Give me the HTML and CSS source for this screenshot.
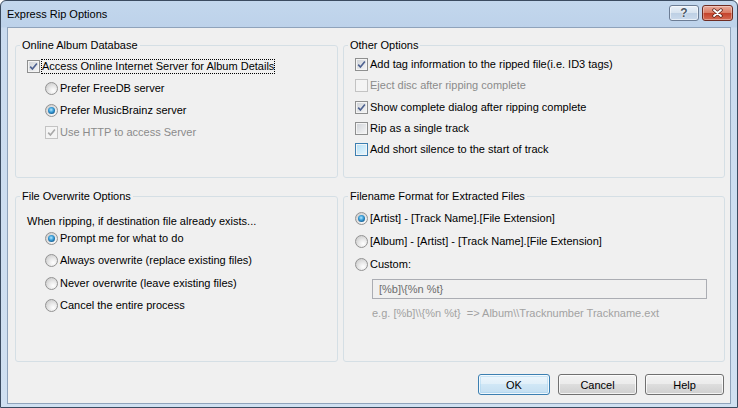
FILE: index.html
```html
<!DOCTYPE html>
<html>
<head>
<meta charset="utf-8">
<title>Express Rip Options</title>
<link rel="stylesheet" href="styles.css">
</head>
<body>
<div class="window">
  <div class="titlebar">
    <span class="title">Express Rip Options</span>
    <div class="caption-btns">
      <span class="cap-btn help">?</span>
      <span class="cap-btn close">
        <svg width="13" height="10" viewBox="0 0 13 10">
          <path d="M3 2 L10 8 M10 2 L3 8" stroke="#5b2218" stroke-width="3.4" stroke-linecap="round"/>
          <path d="M3 2 L10 8 M10 2 L3 8" stroke="#ffffff" stroke-width="1.9" stroke-linecap="round"/>
        </svg>
      </span>
    </div>
  </div>
  <div class="client">
    <div class="groups">
      <fieldset class="group g1">
        <legend>Online Album Database</legend>
        <div class="inner">
          <div class="row"><span class="cb"><svg viewBox="0 0 11 11"><path class="tick" d="M2.2 5.6 L4.4 8 L8.9 2.4"/></svg></span><span class="lbl focus">Access Online Internet Server for Album Details</span></div>
          <div class="sub">
            <div class="row"><span class="rb"></span><span class="lbl">Prefer FreeDB server</span></div>
            <div class="row"><span class="rb on"></span><span class="lbl">Prefer MusicBrainz server</span></div>
            <div class="row"><span class="cb dis"><svg viewBox="0 0 11 11"><path class="tick" d="M2.2 5.6 L4.4 8 L8.9 2.4"/></svg></span><span class="lbl dis">Use HTTP to access Server</span></div>
          </div>
        </div>
      </fieldset>
      <fieldset class="group g2">
        <legend>Other Options</legend>
        <div class="inner">
          <div class="row"><span class="cb"><svg viewBox="0 0 11 11"><path class="tick" d="M2.2 5.6 L4.4 8 L8.9 2.4"/></svg></span><span class="lbl">Add tag information to the ripped file(i.e. ID3 tags)</span></div>
          <div class="row"><span class="cb dis"></span><span class="lbl dis">Eject disc after ripping complete</span></div>
          <div class="row"><span class="cb"><svg viewBox="0 0 11 11"><path class="tick" d="M2.2 5.6 L4.4 8 L8.9 2.4"/></svg></span><span class="lbl">Show complete dialog after ripping complete</span></div>
          <div class="row"><span class="cb"></span><span class="lbl">Rip as a single track</span></div>
          <div class="row"><span class="cb hot"></span><span class="lbl">Add short silence to the start of track</span></div>
        </div>
      </fieldset>
      <fieldset class="group g3">
        <legend>File Overwrite Options</legend>
        <div class="inner">
          <div class="intro">When ripping, if destination file already exists...</div>
          <div class="sub">
            <div class="row"><span class="rb on"></span><span class="lbl">Prompt me for what to do</span></div>
            <div class="row"><span class="rb"></span><span class="lbl">Always overwrite (replace existing files)</span></div>
            <div class="row"><span class="rb"></span><span class="lbl">Never overwrite (leave existing files)</span></div>
            <div class="row"><span class="rb"></span><span class="lbl">Cancel the entire process</span></div>
          </div>
        </div>
      </fieldset>
      <fieldset class="group g4">
        <legend>Filename Format for Extracted Files</legend>
        <div class="inner">
          <div class="row"><span class="rb on"></span><span class="lbl">[Artist] - [Track Name].[File Extension]</span></div>
          <div class="row"><span class="rb"></span><span class="lbl">[Album] - [Artist] - [Track Name].[File Extension]</span></div>
          <div class="row"><span class="rb"></span><span class="lbl">Custom:</span></div>
          <input class="field" type="text" disabled value="[%b]\{%n %t}">
          <div class="example">e.g. [%b]\\{%n %t}&nbsp; =&gt; Album\\Tracknumber Trackname.ext</div>
        </div>
      </fieldset>
    </div>
    <div class="buttons">
      <button class="btn default ok">OK</button>
      <button class="btn">Cancel</button>
      <button class="btn">Help</button>
    </div>
  </div>
</div>
</body>
</html>
```
FILE: styles.css
```css
html, body {
  margin: 0;
  padding: 0;
  background: #ffffff;
}

body {
  font-family: "Liberation Sans", Arial, sans-serif;
  font-size: 11px;
  color: #000;
}

.window {
  width: 738px;
  height: 408px;
  box-sizing: border-box;
  border: 1px solid #3b4b60;
  border-radius: 6px 6px 0 0;
  background: linear-gradient(#c3d7ed 0, #bdd2ea 26px, #cadbef 27px, #d0e0f1 100%);
  display: flex;
  flex-direction: column;
  overflow: hidden;
}

.titlebar {
  height: 26px;
  display: flex;
  align-items: flex-start;
  padding: 0 4px 0 6px;
  flex: none;
}

.title {
  line-height: 26px;
  font-size: 11px;
  color: #000;
}

.caption-btns {
  margin-left: auto;
  margin-top: 4px;
  display: flex;
  gap: 3px;
}

.cap-btn {
  height: 16px;
  box-sizing: border-box;
  border: 1px solid #6c7d95;
  border-radius: 3px;
  display: flex;
  align-items: center;
  justify-content: center;
}

.help {
  width: 30px;
  background: linear-gradient(#eaf1f9, #d6e2ef 50%, #bdcfe4 50%, #cadaec);
  color: #4a5664;
  font-weight: bold;
  font-size: 12px;
  line-height: 14px;
  text-shadow: 0 0 1px #fff, 0 0 2px #fff;
  box-shadow: inset 0 0 0 1px rgba(255,255,255,0.55);
}

.close {
  width: 31px;
  border-color: #6e2c22;
  background: linear-gradient(#eaab9c, #d87a62 50%, #c3412a 50%, #d56a52);
  box-shadow: inset 0 0 0 1px rgba(255,255,255,0.35);
}

.client {
  flex: 1;
  margin: 0 6px 3px 6px;
  border: 1px solid #8fa3bb;
  background: #f0f0f0;
  display: flex;
  flex-direction: column;
}

.groups {
  display: grid;
  grid-template-columns: 323px 382px;
  grid-template-rows: 140px 173px;
  column-gap: 5px;
  row-gap: 11px;
  padding: 10px 5px 0 7px;
}

.group {
  margin: 0;
  padding: 0;
  min-width: 0;
  border: 1px solid #d5dfe5;
  border-radius: 3px;
}

.group legend {
  padding: 0 2px;
  margin-left: 4px;
  line-height: 14px;
  font-size: 11px;
}

.inner {
  padding-left: 11px;
}

.g1 .inner { padding-top: 3px; }
.g2 .inner { padding-top: 2px; }
.g3 .inner { padding-top: 12px; }
.g4 .inner { padding-top: 3.5px; }

.row {
  display: flex;
  align-items: center;
  height: 22px;
  white-space: nowrap;
}

.g2 .row { height: 21.25px; }
.g3 .row { height: 22.5px; }
.g4 .row { height: 23px; }

.sub {
  padding-left: 18px;
}

.intro {
  line-height: 12px;
  height: 12px;
  white-space: nowrap;
}

.lbl {
  line-height: 13px;
}

.lbl.dis {
  color: #8b8b8b;
}

.focus {
  outline: 1px dotted #000;
}

.cb {
  width: 13px;
  height: 13px;
  box-sizing: border-box;
  border: 1px solid #8e8f8f;
  background: linear-gradient(135deg, #cdd1d6, #f7f7f7);
  box-shadow: inset 0 0 0 1px #f4f4f4;
  margin-right: 2px;
  flex: none;
  display: flex;
}

.cb svg {
  width: 11px;
  height: 11px;
}

.tick {
  fill: none;
  stroke: #4d6190;
  stroke-width: 1.6;
}

.cb.dis {
  border-color: #c3c3c3;
  background: #f4f4f4;
}

.cb.dis .tick {
  stroke: #a8a8a8;
}

.cb.hot {
  border-color: #3c7fb1;
  background: linear-gradient(135deg, #b3dff6, #e8f6fd);
}

.rb {
  width: 13px;
  height: 13px;
  box-sizing: border-box;
  border-radius: 50%;
  border: 1px solid #939393;
  background: radial-gradient(circle at 65% 70%, #ffffff 0, #ececec 35%, #cfcfcf 80%);
  margin-right: 2px;
  flex: none;
  display: flex;
  align-items: center;
  justify-content: center;
}

.rb.on::after {
  content: "";
  width: 7px;
  height: 7px;
  border-radius: 50%;
  background: radial-gradient(circle at 45% 40%, #b5e8ff 0, #3b9fd9 40%, #145d92 75%, #0c3a60 100%);
}

.field {
  display: block;
  margin: 3.5px 0 0 17px;
  width: 335px;
  height: 20px;
  box-sizing: border-box;
  border: 1px solid #abadb3;
  border-radius: 0;
  background: #f0f0f0;
  color: #6d6d6d;
  padding: 0 0 0 6px;
  font: inherit;
  line-height: 18px;
  -webkit-appearance: none;
  appearance: none;
}

.example {
  margin: 7px 0 0 17px;
  line-height: 14px;
  color: #a2a2a2;
  white-space: nowrap;
}

.buttons {
  display: flex;
  justify-content: flex-end;
  gap: 8px;
  margin-top: 12px;
  padding-right: 6px;
}

.btn {
  width: 79px;
  height: 21px;
  box-sizing: border-box;
  padding: 0;
  font: inherit;
  color: #000;
  border: 1px solid #707070;
  border-radius: 3px;
  background: linear-gradient(#f2f2f2, #ebebeb 50%, #dddddd 50%, #cfcfcf);
  box-shadow: inset 0 0 0 1px rgba(255,255,255,0.75);
}

.btn.ok {
  width: 72px;
}

.btn.default {
  border-color: #3c7fb1;
  background: linear-gradient(#edf6fc, #e0eff9 50%, #d0e7f6 50%, #c4def1);
  box-shadow: inset 0 0 0 1px rgba(255,255,255,0.8), inset 0 0 0 2px rgba(160,208,240,0.45);
}
```
